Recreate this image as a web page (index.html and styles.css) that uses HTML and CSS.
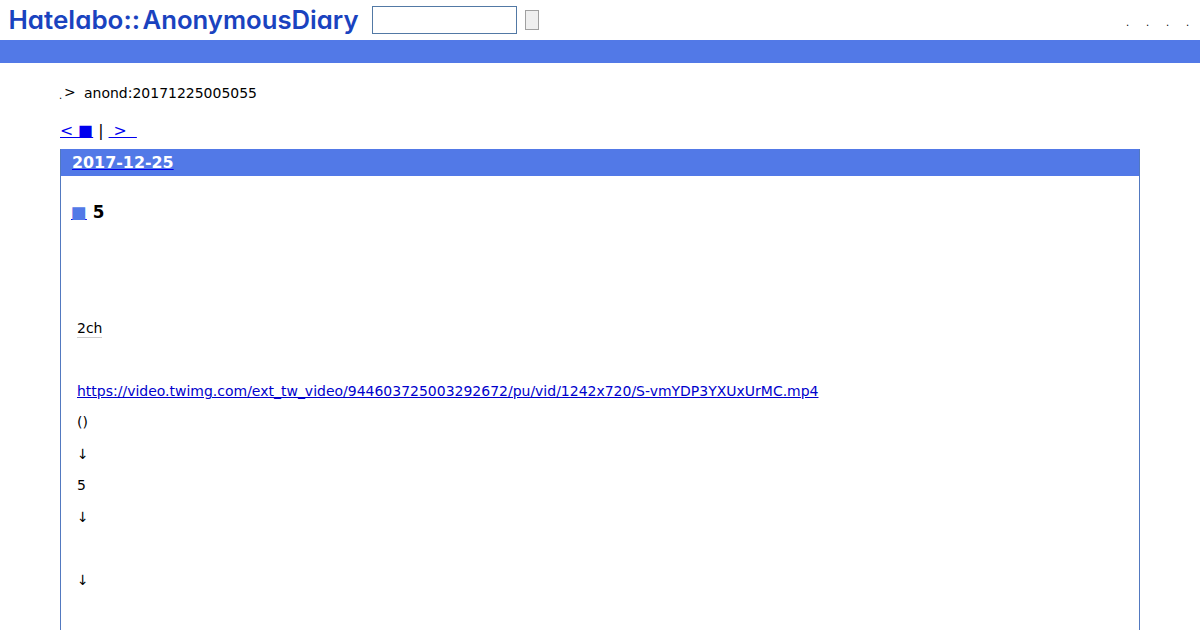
FILE: index.html
```html
<!DOCTYPE html>
<html lang="ja">
<head>
<meta charset="UTF-8">
<title>anond:20171225005055</title>
<link rel="stylesheet" href="styles.css">
</head>
<body>
    <div class="header">
        <svg class="logo" width="360" height="40" role="img" aria-label="Hatelabo::AnonymousDiary">
            <text x="8.5" y="28.7" textLength="131.5" lengthAdjust="spacingAndGlyphs">Hatelabo::</text>
            <text x="142.5" y="28.7" textLength="216" lengthAdjust="spacingAndGlyphs">AnonymousDiary</text>
        </svg>
        <form class="search" onsubmit="event.preventDefault()">
            <input type="text" class="search-word">
            <button class="search-button"></button>
        </form>
        <ul class="menu">
            <li>.</li>
            <li>.</li>
            <li>.</li>
            <li>.</li>
        </ul>
    </div>
    <div class="bar"></div>
    <div class="wrapper">
        <div class="breadcrumb"><span class="dot">.</span><span class="gt">&gt;</span><span>anond:20171225005055</span></div>
        <div class="pager"><a href="#">&lt; ■</a> | <a href="#">&nbsp;&gt;&nbsp;&nbsp;</a></div>
        <div class="day">
            <h2><a href="#">2017-12-25</a></h2>
            <div class="section">
                <h3><a href="#">■</a> 5</h3>
                <p></p>
                <p></p>
                <p><a class="keyword" href="#">2ch</a></p>
                <p></p>
                <p><a href="#">https://video.twimg.com/ext_tw_video/944603725003292672/pu/vid/1242x720/S-vmYDP3YXUxUrMC.mp4</a></p>
                <p>()</p>
                <p>↓</p>
                <p>5</p>
                <p>↓</p>
                <p></p>
                <p>↓</p>
                <p></p>
            </div>
        </div>
    </div>
</body>
</html>
```
FILE: styles.css
```css
body{
    margin: 0;
    height: 630px;
    overflow: hidden;
    background: #fff;
    color: #000;
    font-family: "DejaVu Sans", sans-serif;
    font-size: 13.99px;
    line-height: 21px;
}
a{
    color: #0000cc;
}
.header{
    display: flex;
    height: 40px;
}
.logo{
    flex: none;
}
.logo text{
    fill: #1a43bf;
    font-family: Inter, sans-serif;
    font-size: 25.5px;
    font-weight: 600;
    font-feature-settings: "cv11";
}
.search{
    display: flex;
    align-items: center;
    gap: 8px;
    margin-left: 12px;
}
.search-word{
    box-sizing: border-box;
    width: 145px;
    height: 28px;
    padding: 0 4px;
    border: 1px solid #5279a5;
}
.search-button{
    box-sizing: border-box;
    width: 14px;
    height: 20px;
    padding: 0;
    border: 1px solid #a0a0a0;
    background: #efefef;
}
.menu{
    display: flex;
    margin: 0 10px 0 auto;
    padding: 12px 0 0;
    list-style: none;
    font-size: 10px;
}
.menu li{
    width: 11px;
    padding-left: 9px;
}
.menu li:last-child{
    width: 4px;
}
.bar{
    height: 23px;
    background: #5279e7;
}
.wrapper{
    padding: 20px 60px 0;
}
.breadcrumb{
    display: flex;
    height: 21px;
}
.dot{
    width: 4px;
    margin-left: -1px;
    padding: 2px 1px 0 0;
    font-size: 10px;
}
.gt{
    width: 20px;
    margin-top: -1px;
}
.pager{
    height: 24px;
    margin: 15px 0 6px;
    font-size: 15.8px;
    line-height: 24px;
}
.pager a{
    color: #0000ee;
}
.day{
    border: 1px solid #5279c0;
    border-top: 0;
}
.day h2{
    height: 27px;
    margin: 0;
    padding-left: 11px;
    background: #5279e7;
    font-size: 15.9px;
    line-height: 28px;
}
.day h2 a{
    color: #fff;
    text-decoration-color: #0000ee;
}
.day h2 a:hover{
    text-decoration-color: #fff;
}
.section{
    padding: 24px 10px 0;
}
.section h3{
    height: 24px;
    margin: 0 0 30.9px;
    font-size: 16.8px;
    line-height: 24px;
}
.section h3 a{
    color: #5279e7;
    text-decoration-color: #0000ee;
}
.section p{
    height: 21px;
    margin: 0 6px 10.5px;
}
.section .keyword{
    padding-bottom: 1px;
    border-bottom: 1px solid #ccc;
    color: #000;
    text-decoration: none;
}
```
